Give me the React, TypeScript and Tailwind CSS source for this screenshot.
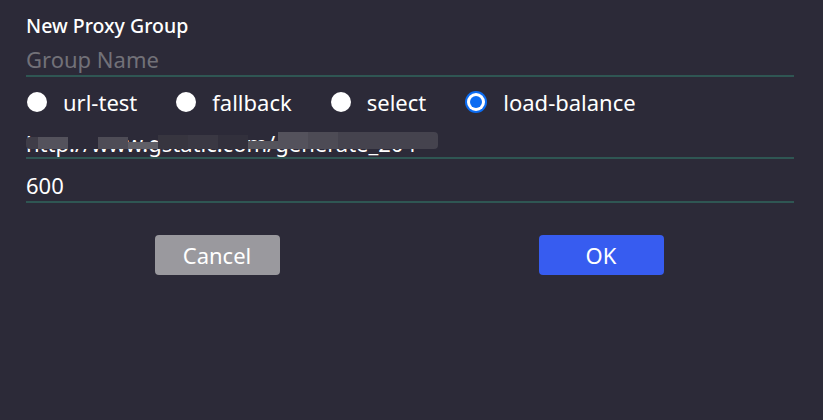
import React from "react";

const font = { fontFamily: '"Noto Sans", "Open Sans", sans-serif' };

function Radio({ label, checked }: { label: string; checked?: boolean }) {
  return (
    <div className="flex items-center gap-[16px]">
      {checked ? (
        <div className="w-[22px] h-[22px] rounded-full bg-[#0c6cf2] flex items-center justify-center">
          <div className="w-[18px] h-[18px] rounded-full bg-white flex items-center justify-center">
            <div className="w-[12px] h-[12px] rounded-full bg-[#0c6cf2]" />
          </div>
        </div>
      ) : (
        <div className="w-[20px] h-[20px] rounded-full bg-white" />
      )}
      <span className="text-[22px] text-white leading-none">{label}</span>
    </div>
  );
}

const blocks = [
  { w: 12, c: "#3f3d48", t: 5 },
  { w: 30, c: "#54525c", t: 5 },
  { w: 30, c: "#2c2a38", t: 0 },
  { w: 30, c: "#4e4c56", t: 5 },
  { w: 30, c: "#605f67", t: 10 },
  { w: 30, c: "#37353f", t: 3 },
  { w: 30, c: "#3a3843", t: 3 },
  { w: 30, c: "#32303c", t: 3 },
  { w: 30, c: "#55545c", t: 9 },
  { w: 30, c: "#54525c", t: 0 },
  { w: 30, c: "#4d4b55", t: 0 },
  { w: 30, c: "#45434e", t: 0 },
  { w: 30, c: "#45434e", t: 0 },
  { w: 30, c: "#45434e", t: 0 },
  { w: 10, c: "#45434e", t: 0 },
];

export default function App() {
  return (
    <div className="w-[823px] h-[420px] bg-[#2c2a38] overflow-hidden" style={font}>
      <div className="pt-[12px] pl-[26px] w-[794px]">
        <div className="text-[19.5px] font-medium text-white leading-[28px]">New Proxy Group</div>
        <div className="border-b-2 border-[#2f5653] h-[37px] flex items-end pb-[1px]">
          <span className="text-[22px] text-[#727178] leading-[30px]">Group Name</span>
        </div>
        <div className="flex items-center h-[50px] gap-[39px] pl-[1px]">
          <Radio label="url-test" />
          <Radio label="fallback" />
          <Radio label="select" />
          <Radio label="load-balance" checked />
        </div>
        <div className="relative border-b-2 border-[#2f5653] h-[32px] overflow-hidden">
          <span className="absolute left-0 top-[1px] text-[22px] text-white leading-[30px] whitespace-nowrap">http://www.gstatic.com/generate_204</span>
          <div className="absolute left-0 top-[5px] h-[17px] w-[440px] flex items-end">
            {blocks.map((b, i) => (
              <div
                key={i}
                className={i === 0 ? "rounded-l" : i === blocks.length - 1 ? "rounded-r" : ""}
                style={{ width: b.w, height: 17 - b.t, background: b.c === "#2c2a38" ? "#2c2a38" : b.c }}
              />
            ))}
          </div>
        </div>
        <div className="border-b-2 border-[#2f5653] h-[44px] flex items-end pb-[1px]">
          <span className="text-[22px] text-white leading-[30px]">600</span>
        </div>
        <div className="flex mt-[32px]">
          <div className="w-[384px] flex justify-center">
            <button className="w-[125px] h-[40px] rounded bg-[#9a999e] text-white text-[22px] -ml-[2px]">Cancel</button>
          </div>
          <div className="w-[384px] flex justify-center">
            <button className="w-[125px] h-[40px] rounded bg-[#375cf0] text-white text-[22px] -ml-[2px]">OK</button>
          </div>
        </div>
      </div>
    </div>
  );
}
